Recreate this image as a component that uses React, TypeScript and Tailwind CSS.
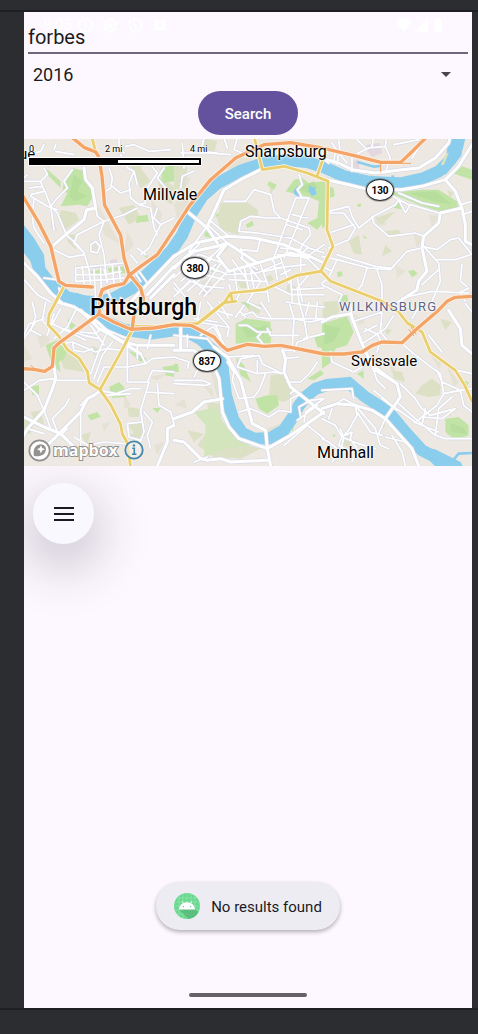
import React from "react";

type Tile = { x: number; y: number; wide: string; thin: string; park: string; hill: string; shade: string };

const WATER =
  "M-10 290L30 345 46 395 82 442 130 478 175 492 M110 470L160 492 220 540 300 575 380 587 450 577 490 582 530 604 570 640 595 682 606 772 628 845 655 885 690 902 740 900 780 876 805 840 825 802 850 772 875 752 910 741 974 735 1024 777 1094 822 1144 882 1194 937 1290 985 M160 490L220 492 270 480 325 450 390 390 445 335 475 290 500 230 535 175 580 136 650 98 715 76 780 66 850 72 900 88 960 115 1040 132 1130 136 1200 120 1245 100 1280 65 1300 25 1308 -10";

const ORANGE =
  "M140 -5L180 28 215 42 224 56 234 115 242 202 290 292 300 360 315 408 350 450 358 480 358 495 M-5 172L45 255 80 325 105 430 125 442 205 447 M225 530L228 475 235 455 260 445 300 437 315 412 350 385 400 350 450 275 495 205 560 125 635 60 720 20 800 14 894 30 1000 55 1070 73 1130 73 1170 35 1210 -5 M-5 692L30 694 62 700 85 685 90 630 105 615 165 572 225 528 270 552 320 574 390 570 450 560 500 562 570 597 590 620 610 637 670 619 720 625 770 622 900 648 960 648 1014 642 1045 622 1074 612 1134 614 1179 572 1240 520 1269 490 1294 478 1350 475 M358 495L330 530 325 570";

const YELLOW =
  "M203 -5L215 42 M120 445L95 492 75 530 72 560 105 595 130 635 165 660 190 700 196 735 228 755 260 800 290 860 295 888 310 915 320 990 M325 575L300 625 228 755 M330 565L400 566 450 557 520 557 545 540 600 495 620 465 720 455 820 412 890 400 927 325 909 275 912 130 850 105 780 85 715 95 690 -5 M620 465L625 490 M520 557L600 494 635 490 M880 112L905 40 M890 398L920 430 1074 490 1124 522 1150 555 1194 582 1219 642 1294 697 1322 742 1344 790";

const tiles: Tile[] = [
  {
    x: 0,
    y: 0,
    wide: "M0 375L40 415 80 465 110 492 M188 215L180 245 125 290 85 325 M180 90L185 125 205 150 215 210 190 215 M450 355L340 470 320 492 M450 385L370 470 M450 410L380 480",
    thin:
      "M60 90L70 110 50 130 55 145 65 165 80 205 100 225 125 285 M0 130L50 130 M15 150L55 145 M20 170L60 160 M20 175L70 205 100 215 M145 95L120 130 130 150 100 180 80 205 M80 205L90 275 M25 240L30 270 60 315 M125 290L160 320 180 345 195 395 200 440 M90 335L135 358 180 350 M215 210L220 235 240 250 300 230 340 210 M240 250L225 290 240 350 245 400 250 435 M240 250L160 290 150 315 180 345 M200 320L215 310 228 325 220 345 200 340 200 320 M255 90L265 120 260 150 245 160 M265 145L290 165 320 155 M290 50L310 90 330 100 315 135 320 180 345 200 380 210 390 270 400 290 M345 200L365 195 360 165 400 105 380 80 M400 210L390 240 410 260 395 290 375 330 350 350 M285 0L285 25 300 45 M305 25L330 20 375 40 440 35 M10 110L0 120 M0 425L40 470 80 492 M155 390L155 430 M155 390L250 380 300 375 M160 410L245 410 290 400 M155 430L250 425 300 420 M175 385L180 440 M210 395L215 480 M230 390L232 470 M265 380L270 440 M285 385L290 435 M240 395L250 430 M105 450L110 470 M320 350L340 375 M0 55L50 40 60 20 M95 40L150 50 M90 35L95 20 M330 400L350 430 M345 400L370 435 M290 480L300 492 M250 455L260 480 M60 420L100 425 M30 180L25 230 45 260 M410 260L450 240 M330 100L340 140 M420 90L400 120 425 150 M365 350L340 330",
    park: "M145 90L180 98 178 120 200 140 205 180 190 205 165 200 110 205 130 165 115 160 120 130z M65 90L110 130 110 150 75 115z M340 235L370 230 375 250 335 255z M200 400L235 395 245 415 205 415z M210 262L228 255 226 262z M410 90L450 80 450 130 415 135z M360 355L372 350 370 360z M250 390L300 385 305 405 260 410z",
    hill: "M110 215L155 225 165 245 125 275 105 240z M130 290L155 290 155 335 130 310z M310 65L365 70 350 90 380 130 350 150z M40 60L90 60 75 90z M400 110L450 145 445 200 410 180z M285 210L330 200 350 240 315 260z",
    shade: "M215 190L290 320 240 290z M310 280L330 320 300 350z M380 180L415 230 400 270z M80 210L100 280 80 270z M200 310L225 320 220 350 195 345z",
  },
  {
    x: 450,
    y: 0,
    wide:
      "M45 225L100 270 130 315 M0 355L65 315 160 295 240 300 330 320 450 375 M0 390L60 340 130 325 160 315 250 375 M260 95L200 125 150 155 130 200 100 265 M160 315L130 355 145 375 165 400 M165 400L250 375 350 345 400 360",
    thin:
      "M150 190L215 190 240 155 290 170 300 220 320 240 405 270 410 290 M195 280L200 250 230 235 280 240 320 240 M195 280L250 285 350 300 405 330 450 345 M365 180L295 370 M405 180L330 360 M365 180L405 180 M375 110L385 140 370 155 385 180 M355 230L400 240 M340 260L385 275 M320 330L380 335 M310 350L370 355 M100 260L160 315 M105 245L165 295 M75 320L0 385 M95 270L45 340 M20 430L130 340 M0 420L75 350 M40 425L150 320 M15 460L110 365 M40 460L125 380 M75 470L145 370 M90 475L165 395 M0 475L50 430 90 445 150 450 M30 400L100 465 M0 435L45 490 M60 365L130 400 M80 350L145 375 M200 330L205 360 260 430 M200 360L250 395 M175 365L215 420 M150 410L250 405 320 375 M165 425L275 430 M180 390L190 460 M210 385L225 460 M230 400L240 450 M260 380L285 450 M300 370L310 425 M320 360L345 435 M165 440L180 490 M200 460L185 490 M260 430L220 492 M230 465L280 460 285 492 M290 440L350 470 450 470 M350 420L355 490 M370 420L385 490 M405 410L370 450 375 490 M400 330L380 350 400 360 M410 290L385 320 370 355 M380 350L380 400 M400 360L440 400 M450 320L400 355 M190 0L180 35 230 55 M150 0L160 30 M90 0L80 40 130 45 M60 100L25 115 20 150 M25 15L30 90 M20 45L100 45 170 50 M90 410L150 425 M100 385L150 405 M0 450L15 465 M300 390L395 380 M320 410L350 395 M270 400L340 385 M355 455L450 450 M260 300L250 340 200 335",
    park:
      "M335 160L360 125 385 120 405 135 450 130 450 250 430 275 400 255 430 240 435 190 400 175 370 170z M285 130L308 140 300 155 280 140z M215 260L235 248 240 262 220 270z M108 395L125 382 130 395 115 405z M95 280L105 285 110 300 90 295z M125 225L135 230 125 240z",
    hill:
      "M140 195L215 190 250 215 255 235 205 245 195 290 140 275 130 240z M0 60L40 90 30 150 0 155z M90 0L130 10 120 45 90 40z M285 135L300 150 290 170z M340 440L365 445 360 475 335 465z M270 420L290 410 300 425 275 435z M190 430L210 420 225 450 200 450z",
    shade: "M0 200L30 160 45 195 10 245z M0 100L50 120 20 180z M150 90L190 60 240 60 180 100z M130 310L170 320 150 345z M80 430L110 420 115 450 85 455z",
  },
  {
    x: 894,
    y: 0,
    wide:
      "M15 125L80 140 140 155 240 155 300 145 370 125 M370 125L400 160 420 210 355 225 M15 65L50 75 90 95 160 105 240 95 290 90 340 60 380 15 385 -5 M355 225L350 255 305 295 300 330 315 400 290 430 285 455 230 492 M420 210L430 260 430 310 450 320 M370 125L410 85 450 20",
    thin:
      "M20 220L80 205 90 235 110 270 155 235 220 200 230 185 250 225 265 200 350 225 M150 235L155 255 200 295 245 290 280 285 305 295 M20 225L65 225 100 270 80 305 20 330 M20 285L95 260 M300 330L255 340 205 395 140 390 45 365 0 355 M45 350L160 385 205 390 M45 365L20 420 0 435 M135 390L120 440 100 465 M165 395L180 440 180 492 M300 325L345 335 385 305 410 300 450 350 M300 320L350 375 355 430 330 490 M345 365L400 365 445 350 M300 440L350 395 M0 440L60 470 50 492 M40 40L35 75 M90 100L90 55 140 30 190 25 195 -5 M130 30L105 5 M150 25L155 -5 M190 25L205 60 190 105 M30 15L50 45 45 80 M215 20L290 5 M290 30L270 60 M0 60L20 75 M50 5L55 50 75 75 M0 385L30 400 M410 465L440 450 M415 465L430 490 M420 380L415 430 435 445 M420 230L450 220 M415 200L450 190 M230 165L300 195 350 205 M260 200L205 170 M240 480L330 460 440 465",
    park:
      "M200 165L300 155 350 155 405 190 410 215 355 220 300 205 240 180z M390 105L420 85 450 95 450 125z M0 125L15 130 15 265 0 270z M20 145L35 150 38 175 20 180z M230 185L250 215 215 210z M105 200L115 195 118 205 108 208z M258 400L275 395 287 407 270 418z M45 402L60 400 62 413 47 418z M123 290L135 300 128 303z M50 475L75 470 80 492 50 492z",
    hill:
      "M190 280L230 275 240 290 200 295z M145 110L185 120 170 160 140 150z M160 240L220 220 180 260z M375 155L395 165 385 180z M190 320L210 340 180 355z M80 310L110 290 120 350 95 345z",
    shade:
      "M160 230L195 260 160 265z M275 290L310 290 285 330z M220 380L250 400 225 420z M320 230L350 235 330 270z",
  },
  {
    x: 0,
    y: 492,
    wide:
      "M100 0L150 15 220 60 270 105 350 155 M90 190L95 230 85 260 60 325 10 380 0 400 M230 265L210 280 190 290 170 330 110 390 70 430 M450 370L430 380 430 420 400 492 M0 345L60 375 110 395 160 445 M170 25L225 80 300 120 340 130 450 130",
    thin:
      "M65 0L55 55 75 80 M25 0L35 45 20 85 50 100 M60 50L15 65 0 100 M110 20L80 75 M155 25L130 75 90 110 M205 50L190 65 M120 80L180 100 225 110 M170 90L215 95 230 80 M85 65L185 115 M90 130L145 120 215 150 M145 120L150 145 180 150 205 140 M245 100L220 160 200 215 M265 120L235 160 210 230 M215 150L245 140 300 145 M240 80L310 110 310 240 M310 195L240 195 220 240 M310 240L370 240 385 205 450 210 M365 185L385 170 450 165 M350 155L365 185 310 195 M90 235L195 235 M0 265L45 235 90 230 M0 240L40 280 60 325 M135 290L125 310 85 350 100 390 M365 270L450 275 M375 240L350 325 360 390 340 440 M230 265L275 275 320 260 350 260 M245 280L320 275 M310 365L355 360 M310 365L315 405 350 415 M170 330L170 430 M190 290L170 310 M400 245L405 310 440 330 450 365 M360 330L385 360 370 400 380 440 M0 110L35 60 M190 430L240 420 300 425 M150 405L200 435 M60 325L80 380 M10 380L60 395 M340 130L340 170 M380 100L370 140 M200 70L240 130 M90 35L70 100 M110 400L130 380",
    park:
      "M65 130L110 110 130 145 120 170 105 180 110 210 85 190z M255 255L285 240 300 255 305 285 265 288z M20 255L45 248 45 275 25 280z M415 195L450 190 450 225 425 220z M130 50L155 70 140 85z M385 318L410 318 400 332z M190 340L220 330 230 345 200 355z M310 145L340 155 370 170 350 180z",
    hill:
      "M65 120L135 150 170 180 180 210 120 200 100 150z M310 365L350 360 365 400 340 410 M310 395L345 395 330 415z M310 315L345 320 345 345 315 345z M20 330L50 325 60 365 35 370z M0 345L30 360 20 395 0 395z M170 400L200 390 190 430z M205 130L240 150 210 160z",
    shade: "M35 85L80 110 50 140z M300 275L320 310 300 320z M370 225L430 215 400 235z M235 365L260 360 240 390z M0 130L25 170 0 180z M390 430L420 420 400 460z",
  },
  {
    x: 450,
    y: 492,
    wide:
      "M120 135L160 165 200 235 220 310 235 365 275 385 280 440 290 492 M0 145L60 145 120 195 135 230 145 330 165 375 195 410 280 440 350 400 450 330 M325 145L335 170 330 210 350 255 450 335 M145 290L90 300 55 330 0 350 M0 415L30 420 80 470 100 475 140 470 170 480 280 475 M20 75L20 140",
    thin:
      "M0 100L100 110 120 135 M0 235L85 235 110 245 95 250 0 245 M0 165L45 180 40 200 M60 225L70 205 M200 170L255 160 265 185 325 215 M160 165L240 160 M200 170L190 195 250 215 250 175 M250 215L300 210 325 215 M275 215L255 265 240 285 195 290 M195 290L175 235 180 210 160 180 M195 330L230 320 285 345 315 325 350 330 350 290 380 275 M350 275L360 265 M205 40L235 30 250 45 280 50 450 50 M195 70L220 70 250 90 290 90 M200 30L215 45 M260 0L290 45 M345 0L360 50 355 130 M375 0L390 50 400 110 370 120 360 150 M260 95L250 105 270 130 M335 0L400 10 450 15 M360 50L410 60 450 50 M280 80L290 100 375 100 M80 0L70 60 160 75 M100 0L165 75 160 105 M135 0L165 50 M60 50L130 60 M110 20L175 40 M125 70L140 100 135 130 M120 75L155 135 M390 110L450 95 M325 145L400 145 M330 170L375 165 M340 240L380 240 410 210 430 180 M405 0L395 40 M430 0L425 50 M60 480L100 465 M380 345L375 315 410 295 450 290 M400 370L450 410 M330 430L400 370 M370 355L430 310 M390 360L395 330 450 290 M210 10L185 45 M220 0L260 20 M80 100L115 75 M40 100L40 135",
    park:
      "M185 65L215 50 260 55 290 60 290 125 235 120 185 125z M255 85L295 80 290 120 260 115z M420 105L450 90 450 140 430 135z M245 290L280 280 310 280 315 310 280 335 255 320z M400 230L440 205 450 215 420 235z M0 185L12 185 15 210 0 210z M350 365L365 355 355 390z M185 165L210 190 230 240 200 220z M200 0L230 0 225 20z",
    hill:
      "M290 220L330 215 350 250 355 290 325 300 285 280z M100 300L140 305 140 350 170 390 220 430 260 440 200 470 120 465 70 430 105 380z M215 0L265 10 255 35 225 30z M370 270L400 265 380 300z M40 385L90 395 60 420z",
    shade: "M275 380L320 365 370 290 380 300 345 370 290 400z M110 205L140 240 145 330 125 270z M0 310L30 290 40 320z M85 250L115 260 120 290z",
  },
  {
    x: 894,
    y: 492,
    wide:
      "M85 35L120 125 150 190 225 245 235 285 190 350 M0 320L45 305 100 310 150 325 190 350 270 440 290 492 M0 60L30 45 85 35 M380 25L415 80 420 130 450 155",
    thin:
      "M365 275L345 310 280 360 210 310 155 265 M125 90L165 70 M120 125L175 90 180 30 M85 5L90 40 M175 90L200 120 240 125 M130 80L165 95 175 115 165 150 M145 110L190 80 215 40 M240 125L275 155 320 190 355 215 365 275 M365 275L415 265 450 260 M235 245L280 290 300 320 325 340 400 320 M225 300L280 350 340 400 370 410 450 410 M340 400L350 320 390 285 M275 360L350 390 M225 325L180 290 M150 190L165 235 190 260 M150 200L215 240 M45 305L65 290 100 310 105 340 80 385 60 405 M100 310L160 380 175 430 200 440 M190 350L170 395 M105 330L145 390 180 400 M30 320L20 350 M0 350L40 370 60 405 50 430 85 450 M60 405L110 425 160 440 M190 405L250 420 M210 400L240 450 250 492 M30 180L25 150 20 155 M30 180L95 210 120 195 M90 155L120 180 M165 200L180 215 M405 205L450 215 M345 205L360 240 415 265 425 310 450 330 M300 345L360 350 400 320 M310 320L300 370 M320 100L360 150 M430 5L450 30 M270 50L300 0 M55 380L65 410 55 450 30 480 M70 400L90 390 85 410 M85 410L105 440 90 480 M0 265L90 260 95 290 M90 60L180 30 M0 410L20 420 45 440",
    park:
      "M0 65L75 42 95 90 75 130 40 140 30 180 0 200z M370 350L410 345 440 370 440 400 400 415 370 390z M35 395L42 402 32 405z M105 215L125 205 125 230z M180 370L190 368 185 378z M420 235L440 240 435 255z",
    hill:
      "M300 250L330 230 355 250 355 280 320 285 280 275z M210 205L240 210 250 240 215 230z M355 50L390 60 370 85z M370 320L390 325 385 345z M60 410L85 400 85 440 65 430z M5 0L70 -5 60 20 30 50 0 50z M185 75L210 85 195 100z",
    shade: "M320 150L360 180 350 200z M375 190L410 240 395 255z M200 180L220 200 210 215z M95 35L130 60 110 70z",
  },
];

function MapArt() {
  const layer = (key: "wide" | "thin" | "park" | "hill" | "shade", props: React.SVGProps<SVGPathElement>) =>
    tiles.map((t) => <path key={key + t.x + "-" + t.y} d={t[key]} transform={`translate(${t.x} ${t.y})`} {...props} />);
  return (
    <svg viewBox="0 3 1344 981" className="block h-auto w-full" fill="none" strokeLinejoin="round" strokeLinecap="round" aria-hidden="true">
      <rect x="0" y="0" width="1344" height="990" fill="#ede9e2" />
      {layer("shade", { fill: "#e5e1d4" })}
      {layer("hill", { fill: "#dce0c5" })}
      <path d="M510 822L580 807 595 852 640 892 680 922 600 932 540 957 545 862z" fill="#d3e5bd" />
      {layer("park", { fill: "#c1e4a6" })}
      <path
        d="M150 110l25 20-15 30 30 15-35 15-20-15zM1155 165l80-5 50 40-60-10zM900 560l50 10-20 40-30 10zM650 560l50 10 30-10-10 30-50 10zM820 150l50-20 10 20-30 15zM1280 855l40 15 10 20-50-10z"
        fill="#b7de9c"
      />
      <path
        d="M1027 20l40-5 8 30-30 12-18-20zM985 70l18-6 4 28-20 2zM258 366l20-4 2 14-20 2zM530 455l25-4 5 16-22 8zM680 390l30 8-12 12-20-5z"
        fill="#e5d7de"
      />
      <g stroke="#8bcdec" strokeLinejoin="miter" strokeLinecap="butt">
        <path d={WATER} strokeWidth="36" />
        <path d="M-10 275L20 320 48 350 40 385M1000 72l50 14 20-2M1106 112l2 14M430 330l20-8M1344 945l-40 2-25 30" strokeWidth="8" />
      </g>
      <path
        d="M0 262L30 300 60 350 65 400 110 455 150 470 170 492 110 485 70 435 0 345zM808 158l12-14 10 20-6 12-12-6zM855 142l18 8 5 18-14 6-10-14zM95 460L160 465 200 478 240 500 225 545 180 525 130 500zM1200 950l30-18 80 40 10 20-80 0zM1265 60L1275 3l45 0-8 50-45 55-40 12z"
        fill="#8bcdec"
      />
      <path d="M1250 82l18-38 6 2-14 34z" fill="#d9e3bd" />
      {layer("thin", { stroke: "#d8dae8", strokeWidth: 9 })}
      {layer("wide", { stroke: "#d5d8e7", strokeWidth: 13 })}
      {layer("thin", { stroke: "#ffffff", strokeWidth: 5 })}
      {layer("wide", { stroke: "#ffffff", strokeWidth: 9 })}
      <path d={YELLOW} stroke="#fbf6e6" strokeWidth="13" />
      <path d={YELLOW} stroke="#eacd6c" strokeWidth="8" />
      <path d={ORANGE} stroke="#fbf1e8" strokeWidth="15" />
      <path d={ORANGE} stroke="#f4a466" strokeWidth="10" />
      <path d="M1070 78v24M1100 76h60M1155 575l14 18M1162 568l14 20M20 682l14 12M325 535v30" stroke="#f4a466" strokeWidth="3" />
    </svg>
  );
}

const halo = "[text-shadow:0_0_2px_#fff,0_0_2px_#fff,0_0_3px_#fff]";

function Shield({ children, place }: { children: string; place: string }) {
  return (
    <span className={`absolute flex h-[22px] w-7 items-center justify-center rounded-[50%] border border-[#333] bg-white text-[10px] font-bold text-black ring-1 ring-[#3333334d] ${place}`}>
      {children}
    </span>
  );
}

function StatusBar() {
  return (
    <div className="pointer-events-none absolute inset-x-0 top-0 flex h-[26px] items-center justify-between pl-[19px] pr-[30px] text-white">
      <div className="flex items-center gap-2.5">
        <span className="text-[15px]">8:05</span>
        <svg className="-ml-1 size-[15px]" viewBox="0 0 24 24" fill="none" stroke="currentColor" strokeWidth="2.6">
          <circle cx="12" cy="12" r="10.5" />
          <path d="M12 10.5v7M12 6v2.6" />
        </svg>
        <svg className="size-[15px]" viewBox="0 0 24 24" fill="none" stroke="currentColor" strokeWidth="3">
          <path d="M10 2h4l.7 3 2.3 1.3 3-.9 2 3.4-2.300 2.200v2l2.300 2.200-2 3.400-3-.9-2.300 1.300L14 22h-4l-.7-3L7 17.700l-3 .9-2-3.400L4.300 13v-2L2 8.800l2-3.400 3 .9L9.300 5z" />
          <circle cx="12" cy="12" r="2.500" />
        </svg>
        <svg className="size-[15px]" viewBox="0 0 24 24" fill="none" stroke="currentColor" strokeWidth="2.6">
          <path d="M12 1.500l9 3.500v7c0 5-4 9-9 10.500C7 21 3 17 3 12V5zM10 7c-4 4 6 6 2 10" />
        </svg>
        <svg className="size-3.5" viewBox="0 0 24 24">
          <rect x="3" y="3" width="18" height="18" rx="2" fill="currentColor" />
          <path d="M8 17l4-10 4 10M9.500 14h5" fill="none" stroke="#fdf8ff" strokeWidth="2" />
        </svg>
      </div>
      <div className="flex items-center gap-0.5">
        <svg className="h-3.5 w-4" viewBox="0 0 16 14" fill="currentColor"><path d="M0 4Q8-3 16 4L8 14z" /></svg>
        <svg className="size-3.5" viewBox="0 0 14 14" fill="currentColor"><path d="M14 0v14H0z" /></svg>
        <svg className="ml-1 h-3.5 w-2" viewBox="0 0 8 14" fill="currentColor"><path d="M2.500 0h3v1.500H8V14H0V1.500h2.500z" /></svg>
      </div>
    </div>
  );
}

function MapView() {
  return (
    <section aria-label="Map" className="relative mt-1 overflow-hidden">
      <MapArt />
      <span className={`absolute left-[-5px] top-[7px] text-[15px] leading-4 text-black ${halo}`}>ue</span>
      <div className="absolute left-[5px] top-[5px] w-[180px] text-[9px] leading-[10px] text-black">
        <div className="relative h-[14px]">
          <span className={`absolute left-0 ${halo}`}>0</span>
          <span className={`absolute left-[76px] ${halo}`}>2 mi</span>
          <span className={`absolute left-[161px] ${halo}`}>4 mi</span>
        </div>
        <div className="flex h-[7px] w-[172px] border-2 border-black bg-white outline outline-white">
          <div className="w-[87px] bg-black" />
        </div>
      </div>
      <span className={`absolute left-[221px] top-[4px] text-base leading-[18px] text-black ${halo}`}>Sharpsburg</span>
      <span className={`absolute left-[119px] top-[47px] text-base leading-[18px] text-black ${halo}`}>Millvale</span>
      <span className={`absolute left-[66px] top-[155px] text-[23px] font-medium leading-7 text-black ${halo}`}>Pittsburgh</span>
      <span className={`absolute left-[315px] top-[160px] text-[13px] leading-4 tracking-widest text-[#5f6488] ${halo}`}>WILKINSBURG</span>
      <span className={`absolute left-[327px] top-[213px] text-[15px] leading-[18px] text-black ${halo}`}>Swissvale</span>
      <span className={`absolute left-[293px] top-[305px] text-base leading-[18px] text-black ${halo}`}>Munhall</span>
      <Shield place="left-[342px] top-[40px]">130</Shield>
      <Shield place="left-[157px] top-[118px]">380</Shield>
      <Shield place="left-[169px] top-[211px]">837</Shield>
      <div className="absolute bottom-1 left-1 flex items-center">
        <svg className="size-[23px]" viewBox="0 0 24 24">
          <circle cx="12" cy="12" r="10.600" fill="#fff" stroke="#92918f" strokeWidth="1.800" />
          <path d="M6.300 17.700C4.800 12 7 6 13 5.500c4 0 6 3 5.700 5.800C18 17 12 19 6.300 17.700z" fill="#92918f" />
          <path d="M13.500 6.500l1.300 3 3 1.300-3 1.300-1.300 3-1.300-3-3-1.300 3-1.300z" fill="#fff" />
        </svg>
        <span className="ml-0.5 font-['Open_Sans'] text-base font-bold leading-6 text-white [-webkit-text-stroke:2px_#92918f] [paint-order:stroke_fill]">mapbox</span>
        <button type="button" aria-label="Map information" className="ml-1.5">
          <svg className="size-5" viewBox="0 0 20 20">
            <circle cx="10" cy="10" r="8.700" fill="#f5f4f0" fillOpacity=".6" stroke="#4486ac" strokeWidth="1.800" />
            <path d="M8.300 8.300H10.300V14M8 14.300h4.400" fill="none" stroke="#4486ac" strokeWidth="1.600" />
            <circle cx="10" cy="5.400" r="1.200" fill="#4486ac" />
          </svg>
        </button>
      </div>
    </section>
  );
}

function AndroidBadge() {
  return (
    <svg className="size-[26px]" viewBox="0 0 26 26" aria-hidden="true">
      <defs><clipPath id="badge"><circle cx="13" cy="13" r="13" /></clipPath></defs>
      <g clipPath="url(#badge)">
        <rect width="26" height="26" fill="#6bd890" />
        <path d="M5 0v26M9 0v26M13 0v26M17 0v26M21 0v26M0 5h26M0 9h26M0 13h26M0 17h26M0 21h26" stroke="#9be8b4" strokeWidth=".5" />
        <path d="M5 16.500L14.500 26H26V21L20 15z" fill="#55b878" opacity=".8" />
      </g>
      <path d="M5 16.500c.2-3 1.700-5.100 3.900-6.300L7.700 8.100l.5-.3 1.300 2.100c2.200-.9 4.800-.9 7 0l1.300-2.100.5.300-1.200 2.100c2.200 1.200 3.700 3.300 3.900 6.300z" fill="#fff" />
      <circle cx="9.300" cy="13.600" r=".7" fill="#5cbf7d" />
      <circle cx="16.700" cy="13.600" r=".7" fill="#5cbf7d" />
    </svg>
  );
}

export default function App() {
  return (
    <div className="flex min-h-screen flex-col bg-[#2b2d30] pb-6 pt-2.5 font-[Roboto,sans-serif] text-[#1d1b20]">
      <div className="flex flex-1 flex-col border-y-2 border-[#1e1f22] pl-6 pr-1.5">
        <main className="relative flex flex-1 flex-col overflow-hidden bg-[#fdf8ff]">
          <StatusBar />
          <div className="px-1">
            <input
              type="text"
              aria-label="Street name"
              defaultValue="forbes"
              className="relative block h-[42px] w-full border-b-2 border-[#6f687c] bg-transparent pt-2.5 text-xl outline-none"
            />
          </div>
          <div className="relative flex h-[37px] items-center">
            <select aria-label="Year" defaultValue="2016" className="h-full w-full appearance-none bg-transparent pl-[9px] pt-1 text-lg outline-none">
              <option>2016</option>
              <option>2017</option>
              <option>2018</option>
            </select>
            <svg className="pointer-events-none absolute right-[21px] top-[18px] h-[5px] w-2.5" viewBox="0 0 10 5" fill="#49454f" aria-hidden="true">
              <path d="M0 0h10L5 5z" />
            </svg>
          </div>
          <button type="button" className="h-11 w-[100px] self-center rounded-full bg-[#64529f] pt-0.5 text-[15px] font-medium text-white">
            Search
          </button>
          <MapView />
          <button
            type="button"
            aria-label="Menu"
            className="ml-[9px] mt-[17px] flex size-[61px] items-center justify-center rounded-full bg-[#faf8ff] shadow-[0_18px_50px_8px_rgba(40,30,50,0.22)]"
          >
            <svg className="h-3.5 w-5" viewBox="0 0 20 14" fill="#1b1b1f" aria-hidden="true">
              <path d="M0 0h20v2H0zM0 6h20v2H0zM0 12h20v2H0z" />
            </svg>
          </button>
          <div className="flex-1" />
          <div
            role="status"
            className="flex h-12 items-center gap-[11px] self-center rounded-full bg-[#edecf3] px-[18px] text-[15px] text-[#1b1b1f] shadow-[0_2px_4px_rgba(0,0,0,0.3)]"
          >
            <AndroidBadge />
            <span className="pt-0.5">No results found</span>
          </div>
          <div className="mb-[11px] mt-[63px] h-1 w-[118px] self-center rounded-full bg-[#656168]" />
        </main>
      </div>
    </div>
  );
}
